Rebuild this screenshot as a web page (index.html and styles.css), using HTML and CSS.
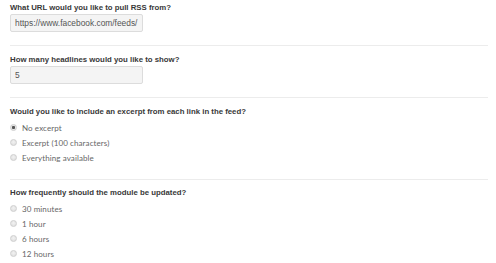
FILE: index.html
```html
<!DOCTYPE html>
<html lang="en">
<head>
    <meta charset="UTF-8">
    <title>RSS module settings</title>
    <link rel="stylesheet" href="styles.css">
</head>
<body>
    <form class="settings">
        <div class="field">
            <label class="q" for="url">What URL would you like to pull RSS from?</label>
            <input class="text" id="url" type="text" value="https://www.facebook.com/feeds/">
        </div>
        <div class="field">
            <label class="q" for="count">How many headlines would you like to show?</label>
            <input class="text" id="count" type="text" value="5">
        </div>
        <div class="field group">
            <div class="q">Would you like to include an excerpt from each link in the feed?</div>
            <div class="choices">
                <label class="opt"><input type="radio" name="excerpt" checked><span>No excerpt</span></label>
                <label class="opt"><input type="radio" name="excerpt"><span>Excerpt (100 characters)</span></label>
                <label class="opt"><input type="radio" name="excerpt"><span>Everything available</span></label>
            </div>
        </div>
        <div class="field group last">
            <div class="q">How frequently should the module be updated?</div>
            <div class="choices">
                <label class="opt"><input type="radio" name="freq"><span>30 minutes</span></label>
                <label class="opt"><input type="radio" name="freq"><span>1 hour</span></label>
                <label class="opt"><input type="radio" name="freq"><span>6 hours</span></label>
                <label class="opt"><input type="radio" name="freq"><span>12 hours</span></label>
            </div>
        </div>
    </form>
</body>
</html>
```

FILE: styles.css
```css
html, body {
    margin: 0;
    background: #fff;
}
.settings {
    padding: 0 8px 0 10px;
}
.field {
    padding: 8px 0 13px;
    border-bottom: 1px solid #ececec;
}
.field:first-child {
    padding-top: 2px;
}
.field.group {
    padding-bottom: 14px;
}
.field.last {
    padding-top: 7px;
    border-bottom: none;
}
.q {
    display: block;
    font-family: "Liberation Sans", Arial, sans-serif;
    font-weight: bold;
    font-size: 7.8px;
    line-height: 12px;
    color: #383838;
}
.text {
    display: block;
    box-sizing: border-box;
    width: 133px;
    height: 18px;
    margin: 0;
    padding: 0 4px;
    border: 1px solid #dcdcdc;
    border-radius: 2px;
    background: #f4f4f4;
    font-family: "Liberation Sans", Arial, sans-serif;
    font-size: 8.4px;
    color: #555;
    outline: none;
}
.choices {
    padding-top: 2px;
}
.opt {
    display: flex;
    align-items: center;
    height: 15px;
    font-family: Lato, sans-serif;
    font-size: 8px;
    letter-spacing: 0.1px;
    color: #666;
}
.opt input {
    appearance: none;
    -webkit-appearance: none;
    box-sizing: border-box;
    width: 7px;
    height: 7px;
    margin: 0 5px 0 0;
    border: 1px solid #cfcfcf;
    border-radius: 50%;
    background: radial-gradient(circle at 50% 40%, #f2f2f2, #dcdcdc);
}
.opt input:checked {
    background: radial-gradient(circle, #555 0, #555 1.3px, #e6e6e6 1.8px, #dcdcdc);
}
```
